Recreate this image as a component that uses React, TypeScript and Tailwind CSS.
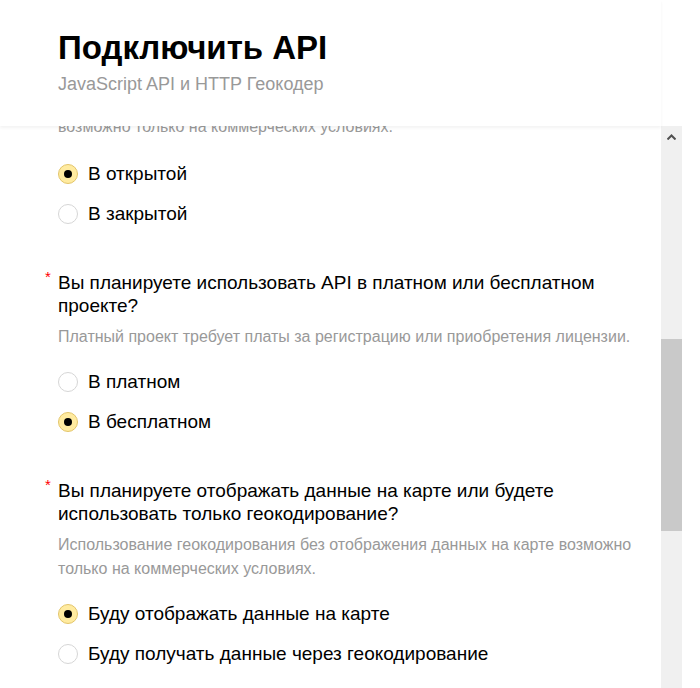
import { useState } from "react";

type Option = { value: string; label: string };

type Question = {
  id: string;
  title: string;
  hint: string;
  options: Option[];
};

const questions: Question[] = [
  {
    id: "paid",
    title: "Вы планируете использовать API в платном или бесплатном проекте?",
    hint: "Платный проект требует платы за регистрацию или приобретения лицензии.",
    options: [
      { value: "paid", label: "В платном" },
      { value: "free", label: "В бесплатном" },
    ],
  },
  {
    id: "display",
    title: "Вы планируете отображать данные на карте или будете использовать только геокодирование?",
    hint: "Использование геокодирования без отображения данных на карте возможно только на коммерческих условиях.",
    options: [
      { value: "map", label: "Буду отображать данные на карте" },
      { value: "geocode", label: "Буду получать данные через геокодирование" },
    ],
  },
];

function Radio({ checked, label, onChange }: { checked: boolean; label: string; onChange: () => void }) {
  return (
    <label className="flex h-10 cursor-pointer items-center" onClick={onChange}>
      <span
        className={
          checked
            ? "flex h-5 w-5 items-center justify-center rounded-full border border-[#e3c56a] bg-[#ffeba0]"
            : "flex h-5 w-5 items-center justify-center rounded-full border border-[#d6d6d6] bg-white"
        }
      >
        {checked && <span className="h-2 w-2 rounded-full bg-black" />}
      </span>
      <span className="ml-[10px] text-[19px] leading-5 text-black">{label}</span>
    </label>
  );
}

export default function App() {
  const [answers, setAnswers] = useState<Record<string, string>>({
    access: "open",
    paid: "free",
    display: "map",
  });

  const pick = (id: string, value: string) => setAnswers((prev) => ({ ...prev, [id]: value }));

  return (
    <div className="flex h-[688px] w-[700px] flex-col overflow-hidden bg-white font-['Liberation_Sans',Arial,sans-serif]">
      {/* Header */}
      <div className="relative z-10 h-[126px] w-[661px] shrink-0 bg-white pl-[58px] pt-[31px] shadow-[0_2px_3px_rgba(0,0,0,0.05)]">
        <h1 className="text-[33px] font-bold leading-[34px] text-black">Подключить API</h1>
        <p className="mt-[8px] text-[18px] leading-[22px] text-[#999]">JavaScript API и HTTP Геокодер</p>
      </div>

      <div className="flex min-h-0 flex-1">
        {/* Scrolled form */}
        <div className="min-w-0 flex-1 overflow-hidden pl-[58px]">
          <div className="-mt-[11px] w-[600px]">
            <p className="text-[16px] leading-[24px] text-[#999]">возможно только на коммерческих условиях.</p>
            <div className="mt-[15px]">
              <Radio checked={answers.access === "open"} label="В открытой" onChange={() => pick("access", "open")} />
              <Radio checked={answers.access === "closed"} label="В закрытой" onChange={() => pick("access", "closed")} />
            </div>

            {questions.map((q) => (
              <div key={q.id} className="pt-[37px]">
                <h3 className="relative text-[19px] leading-[23px] text-black">
                  <span className="absolute -left-[13px] -top-[2px] text-[15px] leading-none text-[#f00]">*</span>
                  {q.title}
                </h3>
                <p className="mt-[8px] text-[16px] leading-[24px] text-[#999]">{q.hint}</p>
                <div className="mt-[13px]">
                  {q.options.map((o) => (
                    <Radio
                      key={o.value}
                      checked={answers[q.id] === o.value}
                      label={o.label}
                      onChange={() => pick(q.id, o.value)}
                    />
                  ))}
                </div>
              </div>
            ))}
          </div>
        </div>

        {/* Scrollbar */}
        <div className="flex w-[21px] shrink-0 flex-col bg-[#f0f0f0]">
          <div className="flex h-[21px] items-center justify-center">
            <svg width="9" height="6" viewBox="0 0 9 6">
              <path d="M0.5 5.5 L4.5 1.5 L8.5 5.5" fill="none" stroke="#505050" strokeWidth="2" />
            </svg>
          </div>
          <div className="mt-[192px] h-[192px] bg-[#c9c9c9]" />
        </div>
        <div className="w-[18px] shrink-0 bg-white" />
      </div>
    </div>
  );
}
